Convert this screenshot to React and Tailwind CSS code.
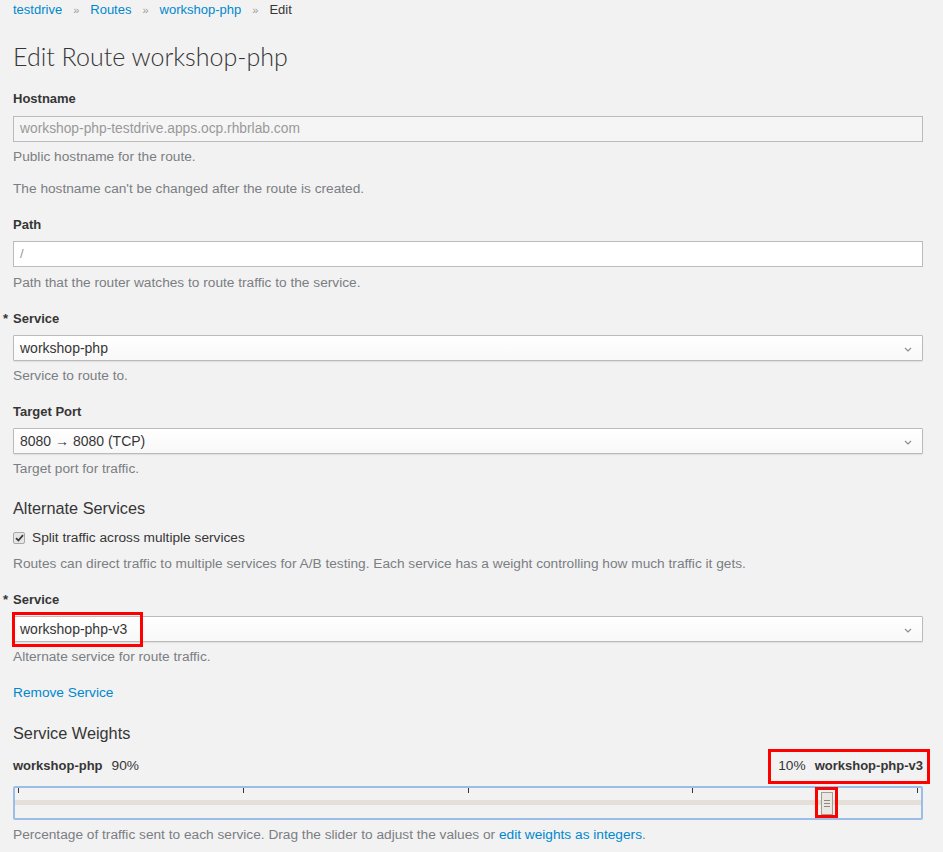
import React from 'react';

const font = { fontFamily: '"Liberation Sans", Arial, sans-serif' };

function Label({ children, required }) {
  return (
    <div className="relative h-[18px] leading-[18px] text-[13px] font-bold text-[#363636]">
      {required && <span className="absolute left-[-10px] top-0 font-bold">*</span>}
      {children}
    </div>
  );
}

function Help({ children, className = '' }) {
  return <div className={`h-[18px] leading-[18px] text-[13.7px] text-[#7b7e82] ${className}`}>{children}</div>;
}

function Chevron() {
  return (
    <svg width="8" height="5" viewBox="0 0 8 5" className="absolute right-[10px] top-[11px]">
      <path d="M1 1 L4 4 L7 1" fill="none" stroke="#8b8d8f" strokeWidth="1.2" />
    </svg>
  );
}

function Select({ value, className = '', children }) {
  return (
    <div className={`relative h-[26px] border border-[#bbbbbb] rounded-[1px] bg-gradient-to-b from-white to-[#f8f8f8] shadow-[0_1px_1px_rgba(0,0,0,0.08)] ${className}`}>
      <div className="pl-[6px] leading-[24px] text-[14px] text-[#363636]">{value}</div>
      <Chevron />
      {children}
    </div>
  );
}

function Breadcrumb() {
  const sep = <span className="mx-[11px] text-[#9c9c9c] text-[11px]">»</span>;
  return (
    <div className="h-[20px] leading-[20px] text-[13px]">
      <span className="text-[#0088ce]">testdrive</span>
      {sep}
      <span className="text-[#0088ce]">Routes</span>
      {sep}
      <span className="text-[#0088ce]">workshop-php</span>
      {sep}
      <span className="text-[#363636]">Edit</span>
    </div>
  );
}

function WeightSlider() {
  const ticks = [0, 25, 50, 75, 100];
  return (
    <div className="relative h-[34px] border-2 border-[#9dbde9] rounded-[2px]">
      {ticks.map((t) => (
        <div
          key={t}
          className="absolute top-0 w-px h-[5px] bg-[#363636]"
          style={{ left: `calc(3px + ${t} * (100% - 7px) / 100)` }}
        />
      ))}
      <div className="absolute left-0 right-0 top-[12px] h-[5px] bg-[#e5dfd9]" />
      <div
        className="absolute top-[4px] w-[12px] h-[23px] bg-[#ebe7e2] border border-[#a39c93] flex flex-col items-center justify-center gap-[2px]"
        style={{ left: 'calc(3px + 90 * (100% - 7px) / 100 - 6px)' }}
      >
        <div className="w-[6px] h-px bg-[#8d877f]" />
        <div className="w-[6px] h-px bg-[#8d877f]" />
        <div className="w-[6px] h-px bg-[#8d877f]" />
      </div>
      <div
        className="absolute top-[-1px] w-[23px] h-[31px] border-[3px] border-[#ff0000]"
        style={{ left: 'calc(3px + 90 * (100% - 7px) / 100 - 12px)' }}
      />
    </div>
  );
}

export default function App() {
  return (
    <div className="min-h-[852px] bg-[#f2f2f2] pl-[13px] pr-[20px] text-[#363636]" style={font}>
      <Breadcrumb />

      <h1
        className="mt-[21px] h-[30px] leading-[30px] text-[25px] font-light text-[#363636]"
        style={{ fontFamily: 'Lato, "Liberation Sans", sans-serif' }}
      >
        Edit Route workshop-php
      </h1>

      <div className="mt-[19px]">
        <Label>Hostname</Label>
      </div>
      <div className="mt-[8px] h-[26px] border border-[#bbbbbb] bg-[#f5f5f5] pl-[6px] leading-[24px] text-[13.8px] text-[#999999]">
        workshop-php-testdrive.apps.ocp.rhbrlab.com
      </div>
      <Help className="mt-[6px]">Public hostname for the route.</Help>
      <Help className="mt-[14px]">The hostname can't be changed after the route is created.</Help>

      <div className="mt-[18px]">
        <Label>Path</Label>
      </div>
      <div className="mt-[7px] h-[26px] border border-[#bbbbbb] bg-white pl-[6px] leading-[24px] text-[13px] text-[#999999]">/</div>
      <Help className="mt-[7px]">Path that the router watches to route traffic to the service.</Help>

      <div className="mt-[18px]">
        <Label required>Service</Label>
      </div>
      <Select value="workshop-php" className="mt-[7px]" />
      <Help className="mt-[6px]">Service to route to.</Help>

      <div className="mt-[18px]">
        <Label>Target Port</Label>
      </div>
      <Select value="8080 → 8080 (TCP)" className="mt-[7px]" />
      <Help className="mt-[6px]">Target port for traffic.</Help>

      <h2 className="mt-[19px] h-[22px] leading-[22px] text-[16.3px] font-normal text-[#363636]">Alternate Services</h2>
      <div className="mt-[10px] h-[18px] flex items-center gap-[7px]">
        <div className="w-[12px] h-[12px] rounded-[2px] border border-[#a8a8a8] bg-[#e6e6e6] flex items-center justify-center">
          <svg width="9" height="8" viewBox="0 0 9 8">
            <path d="M1 4.2 L3.4 6.5 L8 1.2" fill="none" stroke="#3a3a3a" strokeWidth="1.8" />
          </svg>
        </div>
        <span className="text-[13.7px] text-[#363636]">Split traffic across multiple services</span>
      </div>
      <Help className="mt-[8px]">
        Routes can direct traffic to multiple services for A/B testing. Each service has a weight controlling how much traffic it gets.
      </Help>

      <div className="mt-[18px]">
        <Label required>Service</Label>
      </div>
      <Select value="workshop-php-v3" className="mt-[7px]">
        <div className="absolute left-[-2px] top-[-5px] w-[131px] h-[35px] border-[3px] border-[#ff0000]" />
      </Select>
      <Help className="mt-[6px]">Alternate service for route traffic.</Help>

      <div className="mt-[18px] h-[18px] leading-[18px] text-[13.7px] text-[#0088ce]">Remove Service</div>

      <h2 className="mt-[20px] h-[22px] leading-[22px] text-[16.3px] font-normal text-[#363636]">Service Weights</h2>

      <div className="mt-[13px] h-[18px] flex items-center justify-between text-[13px]">
        <div>
          <span className="font-bold">workshop-php</span>
          <span className="ml-[9px] text-[13.7px]">90%</span>
        </div>
        <div className="relative">
          <span className="text-[13.7px]">10%</span>
          <span className="ml-[9px] font-bold">workshop-php-v3</span>
          <div className="absolute left-[-10px] right-[-7px] top-[-7px] h-[35px] border-[3px] border-[#ff0000]" />
        </div>
      </div>

      <div className="mt-[11px]">
        <WeightSlider />
      </div>

      <Help className="mt-[6px]">
        Percentage of traffic sent to each service. Drag the slider to adjust the values or{' '}
        <span className="text-[#0088ce]">edit weights as integers</span>.
      </Help>
    </div>
  );
}
